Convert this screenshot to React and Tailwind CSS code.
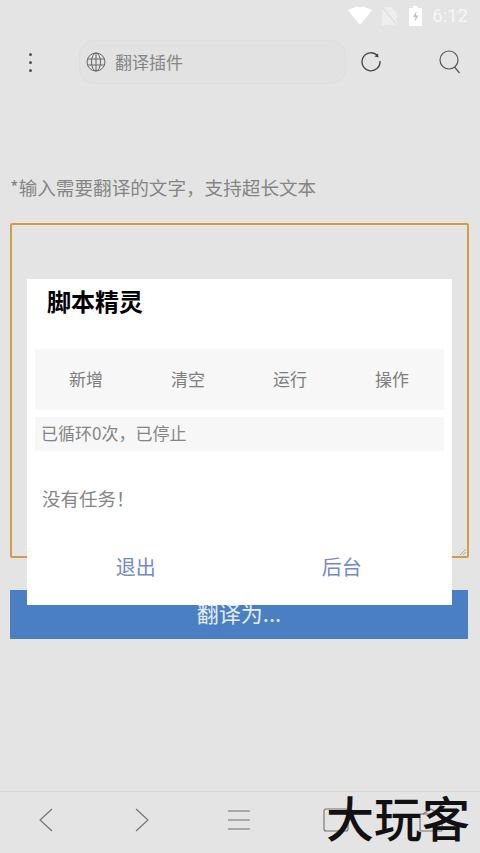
import React from "react";

const cjk = { fontFamily: '"Noto Sans CJK SC", "Noto Sans", sans-serif' };

function StatusBar() {
  return (
    <div className="h-[32px] flex items-center justify-end pr-[12px] text-white">
      <svg width="24" height="18" viewBox="0 0 24 18" className="mr-[10px]"><path d="M0 3.500C7-1.500 17-1.500 24 3.500L12 18Z" fill="#fff" /></svg>
      <svg width="15" height="18" viewBox="0 0 15 18" className="mr-[12px]"><path d="M0 0H9L15 6V18H0Z" fill="#eeeeee" /><path d="M0 0L15 18" stroke="#dcdcdc" strokeWidth="1.2" /></svg>
      <svg width="13" height="20" viewBox="0 0 13 20" className="mr-[10px]"><path d="M4 0H9V2H13V20H0V2H4Z" fill="#fff" /><path d="M7.500 5L4 11H6.500L5.500 16L9.500 9.500H7Z" fill="#c4c4c4" /></svg>
      <span className="text-[18.5px] leading-none text-[#f6f6f6]" style={{ fontFamily: "Roboto, sans-serif" }}>6:12</span>
    </div>
  );
}

function Toolbar() {
  return (
    <div className="h-[44px] mt-[8px] flex items-center">
      <div className="w-[79px] pl-[29px] flex flex-col gap-[5px]">
        <span className="w-[3px] h-[3px] rounded-full bg-[#555]" />
        <span className="w-[3px] h-[3px] rounded-full bg-[#555]" />
        <span className="w-[3px] h-[3px] rounded-full bg-[#555]" />
      </div>
      <div className="w-[267px] h-[44px] rounded-[15px] bg-[#e2e2e2] border border-[#dedede] flex items-center pl-[6px] gap-[9px]">
        <svg width="20" height="20" viewBox="0 0 20 20" fill="none" stroke="#666" strokeWidth="1">
          <circle cx="10" cy="10" r="9" />
          <ellipse cx="10" cy="10" rx="4.500" ry="9" />
          <path d="M10 1V19M1.500 7H18.500M1.500 13H18.500" />
        </svg>
        <span className="text-[17px] leading-none text-[#858585] pb-[1px]" style={cjk}>翻译插件</span>
      </div>
      <div className="ml-[15px] w-[20px] h-[20px]">
        <svg width="20" height="20" viewBox="0 0 20 20" fill="none" stroke="#444" strokeWidth="1.300">
          <path d="M16.500 3.500A9 9 0 1 0 19 9" />
          <path d="M13.500 4.500L17.500 5.500L17 1.500" fill="#444" stroke="none" />
        </svg>
      </div>
      <div className="ml-[58px] w-[22px] h-[24px]">
        <svg width="22" height="24" viewBox="0 0 22 24" fill="none" stroke="#555" strokeWidth="1.200">
          <circle cx="10" cy="10" r="9" />
          <path d="M15.500 17L20.500 23" />
        </svg>
      </div>
    </div>
  );
}

function Dialog() {
  return (
    <div className="absolute left-[27px] top-[279px] w-[425px] h-[326px] bg-white" style={cjk}>
      <div className="h-[70px] pl-[20px] pt-[7px] text-[24px] leading-[30px] font-bold text-black">脚本精灵</div>
      <div className="mx-[8px] h-[61px] bg-[#f7f7f7] grid grid-cols-4 items-center text-center text-[17px] leading-[26px] text-[#7d7d7d] pb-[2px] pr-[1px]">
        <span>新增</span>
        <span>清空</span>
        <span>运行</span>
        <span>操作</span>
      </div>
      <div className="mx-[8px] mt-[7px] h-[34px] bg-[#f7f7f7] flex items-center pl-[6px] pb-[2px] text-[17px] text-[#858585]">已循环0次，已停止</div>
      <div className="mt-[33px] pl-[15px] text-[18.5px] leading-[28px] text-[#858585]">没有任务！</div>
      <div className="mt-[41px] grid grid-cols-2 text-[20px] leading-[28px] text-[#7389c9]">
        <span className="text-center pl-[5px]">退出</span>
        <span className="text-center pr-[8px]">后台</span>
      </div>
    </div>
  );
}

function BottomBar() {
  const s = { stroke: "#707070", strokeWidth: 1.1, fill: "none" };
  return (
    <div className="h-[62px] border-t border-[#d6d6d6] relative flex items-center pb-[6px]">
      <div className="grid grid-cols-5 w-full">
        <div className="flex justify-center">
          <svg width="14" height="24" viewBox="0 0 14 24" {...s} className="mr-[4px]"><path d="M13 1L1 12L13 23" /></svg>
        </div>
        <div className="flex justify-center">
          <svg width="14" height="24" viewBox="0 0 14 24" {...s} className="mr-[4px]"><path d="M1 1L13 12L1 23" /></svg>
        </div>
        <div className="flex justify-center items-center">
          <svg width="22" height="20" viewBox="0 0 22 20" {...s} className="mr-[2px]"><path d="M0 1H22M0 10H22M0 19H22" /></svg>
        </div>
        <div className="flex justify-center items-center">
          <svg width="26" height="24" viewBox="0 0 26 24" {...s}><rect x="1" y="1" width="24" height="22" rx="2" /></svg>
        </div>
        <div className="flex justify-center items-center">
          <svg width="24" height="24" viewBox="0 0 24 24" {...s} className="ml-[-2px]"><rect x="1" y="6" width="22" height="17" rx="1" /><path d="M4 6L12 1L20 6" /></svg>
        </div>
      </div>
      <div className="absolute left-[326px] top-[-6px] text-[48px] leading-[60px] font-medium text-[#111] whitespace-nowrap" style={cjk}>大玩客</div>
    </div>
  );
}

export default function App() {
  return (
    <div className="relative w-[480px] h-[853px] bg-[#e4e4e4] flex flex-col overflow-hidden" style={cjk}>
      <StatusBar />
      <Toolbar />
      <div className="flex-1 px-[10px]">
        <p className="mt-[90px] text-[18.6px] leading-[26px] text-[#858585]">*输入需要翻译的文字，支持超长文本</p>
        <div className="relative mt-[23px] h-[335px] w-[459px] border-2 border-[#cf9f48] rounded-[2px]">
          <svg width="6" height="6" viewBox="0 0 6 6" className="absolute right-[1px] bottom-[1px]" fill="none" stroke="#999" strokeWidth="0.8"><path d="M0 6L6 0M3 6L6 3" /></svg>
        </div>
        <div className="mt-[32px] h-[49px] w-[458px] bg-[#4a7fc4] flex items-center justify-center pb-[4px] text-[22px] text-[#e6ecf6]">翻译为...</div>
      </div>
      <BottomBar />
      <Dialog />
    </div>
  );
}
